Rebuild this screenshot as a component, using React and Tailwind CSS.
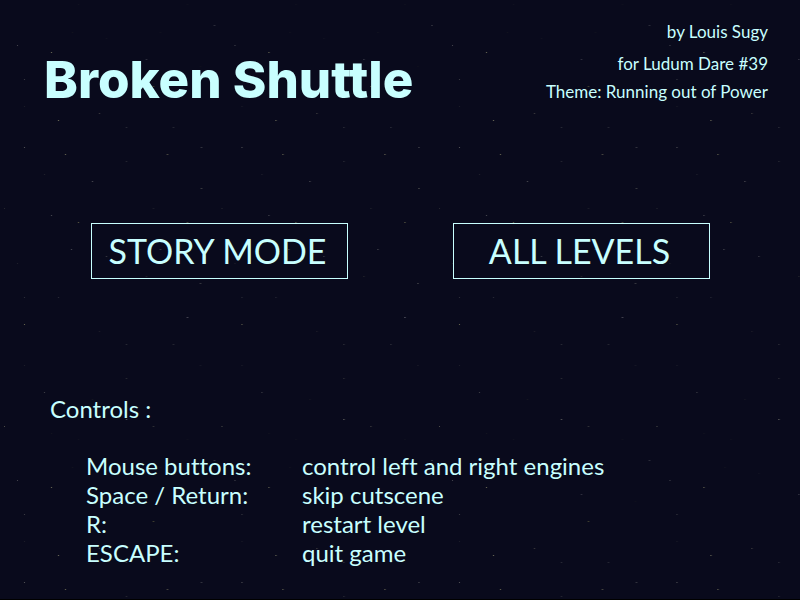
const TILE_STARS = [
  [78, 4, '#12131f'], [187, 4, '#12131f'], [214, 25, '#4a4a52'], [72, 32, '#14151f'], [160, 32, '#14151f'],
  [106, 38, '#141522'], [17, 45, '#45464e'], [51, 52, '#77765c'], [146, 59, '#4a4a55'], [200, 66, '#11121c'],
  [24, 79, '#3c3d44'], [153, 86, '#66643c'], [24, 106, '#1c1d28'], [99, 113, '#4c4b48'], [58, 120, '#7c7b62'],
  [126, 127, '#3a3b44'], [173, 127, '#3a3b44'], [24, 147, '#55565a'], [201, 147, '#55565a'], [65, 154, '#77755c'],
  [167, 154, '#77755c'], [126, 161, '#33343c'], [44, 174, '#22232d'], [92, 181, '#5c5c60'], [201, 188, '#62625a'],
  [4, 208, '#26272f'], [153, 208, '#26272f'], [51, 215, '#505158'], [78, 222, '#6e6c4e'], [187, 222, '#6e6c4e'],
  [71, 249, '#55565c'], [160, 249, '#55565c'], [106, 256, '#484950'], [17, 263, '#1e1f2a'], [146, 276, '#2c2d30'],
  [200, 283, '#5c5c5c'], [24, 297, '#2e2f3a'], [58, 297, '#2e2f3a'], [187, 317, '#72727a'], [24, 324, '#6a6a50'],
  [99, 331, '#22232c'], [126, 344, '#3a3b42'], [173, 344, '#3a3b42'], [24, 365, '#1e1f2a'], [200, 365, '#1e1f2a'],
  [126, 378, '#3a3a3e'], [44, 392, '#45464c'], [92, 399, '#191a22'], [126, 419, '#7a7a72'], [4, 426, '#4c4c48'],
  [153, 426, '#4c4c48'], [51, 433, '#14151f'],
];

const CONTROLS = [
  ['Mouse buttons:', 'control left and right engines'],
  ['Space / Return:', 'skip cutscene'],
  ['R:', 'restart level'],
  ['ESCAPE:', 'quit game'],
];

function Starfield() {
  return (
    <svg className="absolute inset-0 -z-10 h-full w-full" aria-hidden="true">
      <defs>
        <pattern id="stars" width="217.5" height="435" patternUnits="userSpaceOnUse">
          {TILE_STARS.map(([x, y, fill]) => (
            <rect key={`${x}-${y}`} x={x} y={y} width="1" height="1" fill={fill} />
          ))}
        </pattern>
      </defs>
      <rect width="100%" height="100%" fill="url(#stars)" />
    </svg>
  );
}

function MenuButton({ children }) {
  return (
    <button
      type="button"
      className="h-14 w-[257px] cursor-pointer border border-[#c8ffff] pr-1 text-[34px] leading-none hover:bg-[#c8ffff]/10"
    >
      {children}
    </button>
  );
}

export default function App() {
  return (
    <main className="relative isolate min-h-screen overflow-hidden border-b border-black bg-[#090a1c] font-['Lato',sans-serif] text-[#c8ffff] [font-variant-ligatures:none]">
      <Starfield />
      <header className="flex items-start justify-between pt-4 pr-8 pl-11">
        <h1 className="pt-8 font-['Inter',sans-serif] text-[51px] leading-16 font-extrabold">Broken Shuttle</h1>
        <div className="text-right text-[17px] leading-8">
          <p>by Louis Sugy</p>
          <p>for Ludum Dare #39</p>
          <p className="leading-6">Theme: Running out of Power</p>
        </div>
      </header>
      <nav className="mt-[111px] flex justify-between pr-[90px] pl-[91px]">
        <MenuButton>STORY MODE</MenuButton>
        <MenuButton>ALL LEVELS</MenuButton>
      </nav>
      <section className="mt-[115px] pl-[50px] text-2xl leading-[29px]">
        <h2>Controls :</h2>
        <dl className="mt-7 grid grid-cols-[216px_1fr] pl-9">
          {CONTROLS.map(([input, action]) => (
            <div key={input} className="contents">
              <dt>{input}</dt>
              <dd>{action}</dd>
            </div>
          ))}
        </dl>
      </section>
    </main>
  );
}
